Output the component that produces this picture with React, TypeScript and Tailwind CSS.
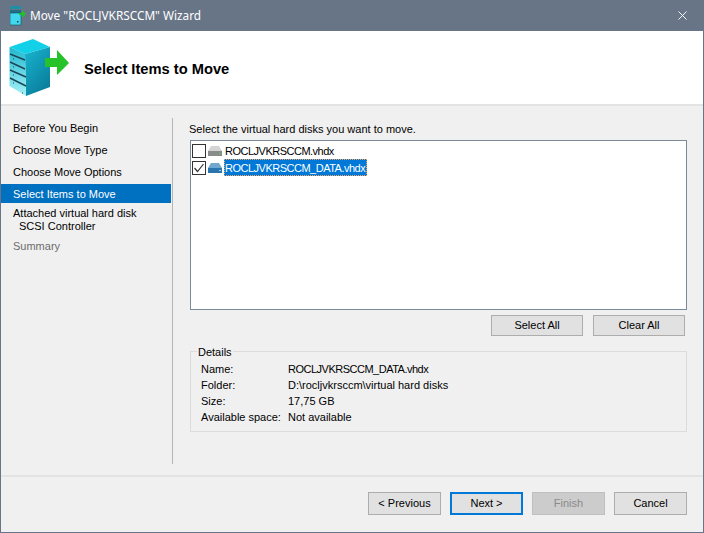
import { X } from "lucide-react";

const steps = ["Before You Begin", "Choose Move Type", "Choose Move Options"];

const details = [
  { label: "Name:", value: "ROCLJVKRSCCM_DATA.vhdx", caps: true },
  { label: "Folder:", value: "D:\\rocljvkrsccm\\virtual hard disks" },
  { label: "Size:", value: "17,75 GB" },
  { label: "Available space:", value: "Not available" },
];

const ServerLogo = () => (
  <svg width="62" height="58" viewBox="0 0 62 58" className="block">
    <defs>
      <linearGradient id="side" x1="0" y1="0" x2="0.6" y2="1">
        <stop offset="0" stopColor="#18b6d2" />
        <stop offset="1" stopColor="#0a7f9c" />
      </linearGradient>
      <linearGradient id="front" x1="0" y1="0" x2="0" y2="1">
        <stop offset="0" stopColor="#1fb8cf" />
        <stop offset="1" stopColor="#a6f1f7" />
      </linearGradient>
    </defs>
    <path d="M0.5 8 L24 0 L41 8 L16 15 Z" fill="#12d0e8" />
    <path d="M16 15 L41 8 L41 48 L17 57 Z" fill="url(#side)" />
    <path d="M0.5 8 L16 15 L17 57 L0.5 47 Z" fill="url(#front)" />
    <path d="M1 15 L16 21 M1 23 L16 30 M1 31 L17 38 M1 39 L17 47" stroke="#1a4656" strokeWidth="1.4" fill="none" />
    <path d="M4 20 h1 M4 28 h1 M4 36 h1 M4 44 h1 M13 54 h1" stroke="#1a4656" strokeWidth="1" fill="none" />
    <path d="M36 19 H48 V11 L60 24 L48 36 V28 H36 Z" fill="#26c22a" />
  </svg>
);

const TitleIcon = () => (
  <svg width="16" height="20" viewBox="0 0 16 20" className="block">
    <rect x="0" y="0" width="11" height="3" fill="#1f8fa6" />
    <rect x="0" y="4" width="11" height="3" fill="#1f6f86" />
    <rect x="0" y="7" width="11" height="12" fill="#3fd8ee" stroke="#15505f" strokeWidth="0.6" />
    <rect x="7" y="15" width="1.5" height="1.5" fill="#12404f" />
    <path d="M9 7 h3 v-3 l4 4 l-4 4 v-3 h-3 Z" fill="#24c02c" />
  </svg>
);

const DiskIcon = ({ selected }: { selected: boolean }) => (
  <svg width="14" height="10" viewBox="0 0 14 10" className="block shrink-0">
    <path d="M3 0 h8 l3 5 h-14 Z" fill={selected ? "#6fa7cf" : "#d4d4d4"} />
    <rect x="0" y="5" width="14" height="5" fill={selected ? "#2b74ad" : "#8b8b8b"} />
    <rect x="11" y="7" width="2" height="1" fill={selected ? "#9fd0ee" : "#3ddc4a"} />
  </svg>
);

const Btn = ({ label, disabled, primary }: { label: string; disabled?: boolean; primary?: boolean }) => (
  <div
    className={
      "w-[73px] h-[23px] flex items-center justify-center " +
      (primary
        ? "border-2 border-[#0078d7] bg-[#e1e1e1] text-black"
        : disabled
          ? "border border-[#bfbfbf] bg-[#cccccc] text-[#8a8a8a]"
          : "border border-[#adadad] bg-[#e1e1e1] text-black")
    }
  >
    {label}
  </div>
);

const Row = ({ name, selected }: { name: string; selected: boolean }) => (
  <div className="flex items-center h-[17px]">
    <div className="w-[14px] h-[14px] border border-[#333333] bg-white flex items-center justify-center shrink-0">
      {selected && (
        <svg width="12" height="12" viewBox="0 0 12 12">
          <path d="M1.5 6 L4.5 9.5 L10.5 2" stroke="#333333" strokeWidth="1.2" fill="none" />
        </svg>
      )}
    </div>
    <div className="ml-[2px]">
      <DiskIcon selected={selected} />
    </div>
    <span
      className={
        "ml-[2px] h-[17px] pr-px pt-px flex items-center border tracking-[-0.5px] " +
        (selected ? "bg-[#0078d7] text-white border-dotted border-[#f4a460]" : "border-transparent text-black")
      }
    >
      {name}
    </span>
  </div>
);

const App = () => {
  return (
    <div
      className="w-[704px] h-[533px] flex flex-col bg-[#f0f0f0] border-x border-b border-[#687587] text-[11px] overflow-hidden text-black"
      style={{ fontFamily: '"Liberation Sans", sans-serif' }}
    >
      {/* Title bar */}
      <div className="h-[31px] -mx-px bg-[#687587] flex items-center pl-[10px] pr-[14px] shrink-0">
        <TitleIcon />
        <span className="ml-[4px] text-[11.8px] text-white" style={{ fontFamily: '"Noto Sans", sans-serif' }}>
          Move "ROCLJVKRSCCM" Wizard
        </span>
        <X className="ml-auto text-white" size={15} strokeWidth={1.5} />
      </div>

      {/* Header */}
      <div className="h-[75px] bg-white border-b-2 border-[#e3e3e3] flex items-center pl-[8px] shrink-0">
        <ServerLogo />
        <h1 className="ml-[13px] pt-[4px] text-[14.7px] font-bold">Select Items to Move</h1>
      </div>

      {/* Body */}
      <div className="flex-1 flex pt-[12px] min-h-0">
        <div className="w-[172px] h-[346px] border-r border-[#b5b5b5] shrink-0">
          {steps.map((s) => (
            <div key={s} className="h-[22px] flex items-center pl-[12px] first:-mt-px">
              {s}
            </div>
          ))}
          <div className="h-[19px] mt-px mr-px pt-px flex items-center pl-[12px] bg-[#0070c0] text-white">Select Items to Move</div>
          <div className="pl-[12px] pt-[4px] leading-[13px]">
            <div>Attached virtual hard disk</div>
            <div className="pl-[6px]">SCSI Controller</div>
          </div>
          <div className="pl-[12px] mt-[7px] text-[#6d6d6d] leading-[13px]">Summary</div>
        </div>

        <div className="flex-1 pl-[16px] pr-[16px] pt-[4px]">
          <p className="leading-[15px]">Select the virtual hard disks you want to move.</p>
          <div className="mt-[3px] h-[170px] ml-px border border-[#7a8a99] bg-white pt-px pl-px">
            <Row name="ROCLJVKRSCCM.vhdx" selected={false} />
            <Row name="ROCLJVKRSCCM_DATA.vhdx" selected />
          </div>
          <div className="mt-[5px] flex justify-end gap-[10px] pr-[2px]">
            <div className="w-[92px] h-[21px] border border-[#adadad] bg-[#e1e1e1] flex items-center justify-center">Select All</div>
            <div className="w-[92px] h-[21px] border border-[#adadad] bg-[#e1e1e1] flex items-center justify-center">Clear All</div>
          </div>
          <div className="relative mt-[15px] ml-px h-[81px] border border-[#dcdcdc] pl-[10px] pt-[9px]">
            <span className="absolute left-[6px] -top-[6px] bg-[#f0f0f0] px-px leading-[13px]">Details</span>
            {details.map((d) => (
              <div key={d.label} className="flex h-[16px] items-center">
                <span className="w-[87px] shrink-0">{d.label}</span>
                <span className={d.caps ? "tracking-[-0.5px]" : ""}>{d.value}</span>
              </div>
            ))}
          </div>
        </div>
      </div>

      {/* Footer */}
      <div className="h-[57px] border-t-2 border-[#e3e3e3] flex justify-end gap-[9px] pt-[15px] pr-[16px] shrink-0">
        <Btn label="< Previous" />
        <Btn label="Next >" primary />
        <Btn label="Finish" disabled />
        <Btn label="Cancel" />
      </div>
    </div>
  );
};

export default App;
